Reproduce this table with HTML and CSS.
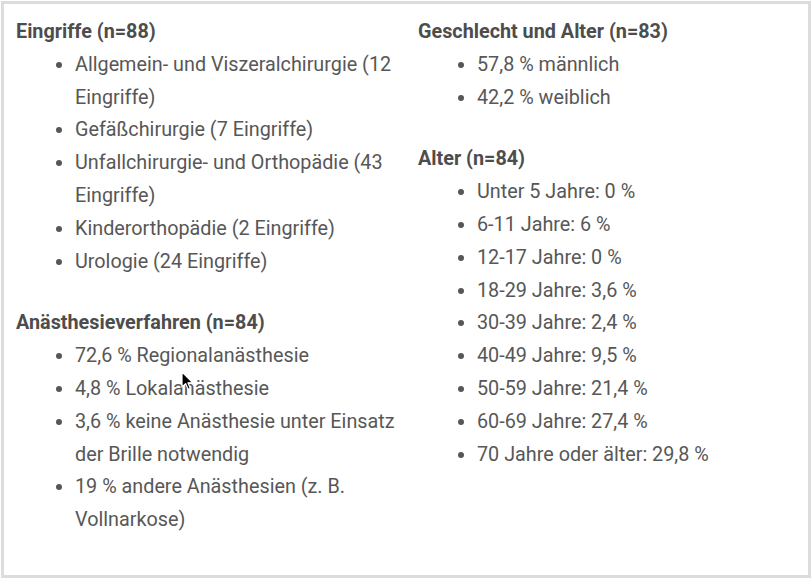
FILE: index.html
```html
<!DOCTYPE html>
<html lang="de">
<head>
<meta charset="utf-8">
<title>Statistik</title>
<link rel="stylesheet" href="styles.css">
</head>
<body>
<div class="panel">
  <div class="col">
    <p class="head">Eingriffe (n=88)</p>
    <ul class="list">
      <li>Allgemein- und Viszeralchirurgie (12 Eingriffe)</li>
      <li>Gefäßchirurgie (7 Eingriffe)</li>
      <li>Unfallchirurgie- und Orthopädie (43 Eingriffe)</li>
      <li>Kinderorthopädie (2 Eingriffe)</li>
      <li>Urologie (24 Eingriffe)</li>
    </ul>
    <p class="head">Anästhesieverfahren (n=84)</p>
    <ul class="list">
      <li>72,6 % Regionalanästhesie</li>
      <li>4,8 % Lokalanästhesie</li>
      <li>3,6 % keine Anästhesie unter Einsatz der Brille notwendig</li>
      <li>19 % andere Anästhesien (z. B. Vollnarkose)</li>
    </ul>
  </div>
  <div class="col">
    <p class="head">Geschlecht und Alter (n=83)</p>
    <ul class="list">
      <li>57,8 % männlich</li>
      <li>42,2 % weiblich</li>
    </ul>
    <p class="head">Alter (n=84)</p>
    <ul class="list">
      <li>Unter 5 Jahre: 0 %</li>
      <li>6-11 Jahre: 6 %</li>
      <li>12-17 Jahre: 0 %</li>
      <li>18-29 Jahre: 3,6 %</li>
      <li>30-39 Jahre: 2,4 %</li>
      <li>40-49 Jahre: 9,5 %</li>
      <li>50-59 Jahre: 21,4 %</li>
      <li>60-69 Jahre: 27,4 %</li>
      <li>70 Jahre oder älter: 29,8 %</li>
    </ul>
  </div>
  <svg class="cursor" width="13" height="20" viewBox="0 0 13 20" aria-hidden="true">
    <path d="M1 1 L1 16 L4.6 12.6 L7.2 18.4 L9.4 17.4 L6.9 11.8 L11.6 11.6 Z" fill="#000" stroke="#fff" stroke-width="1.2" stroke-linejoin="round"/>
  </svg>
</div>
</body>
</html>
```
FILE: styles.css
```css
html, body {
  margin: 0;
  padding: 0;
  background: #fff;
}
body {
  font-family: Roboto, "Noto Sans", "Liberation Sans", sans-serif;
  font-size: 19.8px;
  line-height: 32.8px;
  color: #575757;
}
.panel {
  position: relative;
  box-sizing: border-box;
  width: 810px;
  height: 577px;
  margin: 1px 0 0 1px;
  border: 3px solid #dcdcdc;
  padding: 12px 12px 0 12px;
  display: grid;
  grid-template-columns: 402px 1fr;
  align-items: start;
}
.head {
  margin: 0;
  font-weight: 700;
  color: #4d4d4d;
}
.list {
  margin: 0 0 29px 0;
  padding-left: 59px;
}
.list:last-child {
  margin-bottom: 0;
}
.cursor {
  position: absolute;
  left: 177px;
  top: 367px;
}
```
